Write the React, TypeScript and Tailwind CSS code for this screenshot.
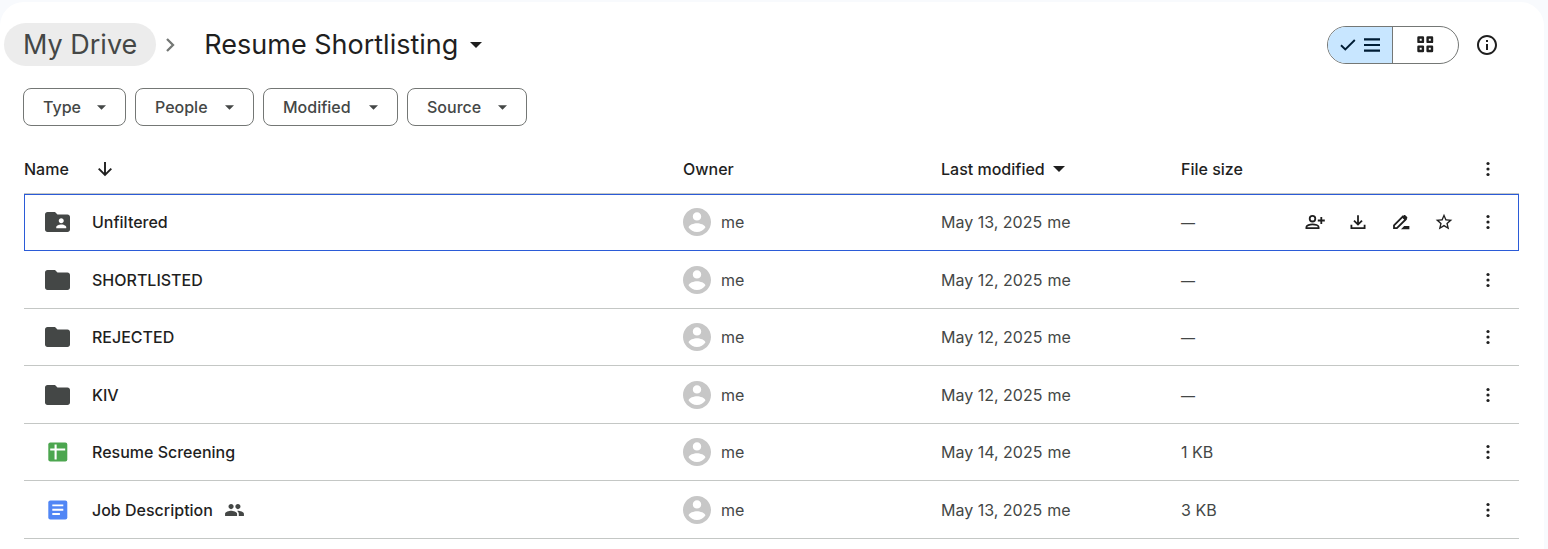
import type { ReactNode } from "react";

type FileKind = "shared-folder" | "folder" | "sheet" | "doc";

type FileRow = {
  name: string;
  kind: FileKind;
  modified: string;
  size?: string;
  selected?: boolean;
  shared?: boolean;
};

const files: FileRow[] = [
  { name: "Unfiltered", kind: "shared-folder", modified: "May 13, 2025", selected: true },
  { name: "SHORTLISTED", kind: "folder", modified: "May 12, 2025" },
  { name: "REJECTED", kind: "folder", modified: "May 12, 2025" },
  { name: "KIV", kind: "folder", modified: "May 12, 2025" },
  { name: "Resume Screening", kind: "sheet", modified: "May 14, 2025", size: "1 KB" },
  { name: "Job Description", kind: "doc", modified: "May 13, 2025", size: "3 KB", shared: true },
];

const filters = [
  { label: "Type", width: "min-w-[103px]" },
  { label: "People", width: "min-w-[119px]" },
  { label: "Modified", width: "min-w-[135px]" },
  { label: "Source", width: "min-w-[120px]" },
];

function Caret({ className }: { className: string }) {
  return (
    <svg viewBox="0 0 10 5" className={className} fill="currentColor" aria-hidden="true">
      <path d="M0 0h10L5 5z" />
    </svg>
  );
}

function KindIcon({ kind }: { kind: FileKind }) {
  if (kind === "sheet") {
    return (
      <svg viewBox="0 0 20 20" className="mx-[3px] size-5" aria-hidden="true">
        <rect x="0.3" y="0.5" width="19" height="19" rx="2" fill="#4ca64f" />
        <path d="M2.2 7.500h15M7.600 2.500v15" stroke="#fff" strokeWidth="2.1" fill="none" />
      </svg>
    );
  }
  if (kind === "doc") {
    return (
      <svg viewBox="0 0 20 20" className="mx-[3px] size-5" aria-hidden="true">
        <rect x="0.3" y="0.5" width="19" height="19" rx="2" fill="#5186f5" />
        <path d="M4.300 5.400h11M4.300 9.700h11M4.300 14h7.600" stroke="#fff" strokeWidth="1.9" fill="none" />
      </svg>
    );
  }
  return (
    <svg viewBox="2 4 20.800 16" className="h-5 w-[26px] text-[#444746]" fill="currentColor" aria-hidden="true">
      {kind === "folder" ? (
        <path d="M10 4H4c-1.1 0-1.99.9-1.99 2L2 18c0 1.1.9 2 2 2h16c1.1 0 2-.9 2-2V8c0-1.1-.9-2-2-2h-8l-2-2z" />
      ) : (
        <path d="M20 6h-8l-2-2H4c-1.1 0-1.99.9-1.99 2L2 18c0 1.1.9 2 2 2h16c1.1 0 2-.9 2-2V8c0-1.1-.9-2-2-2zm-5 3c1.1 0 2 .9 2 2s-.9 2-2 2-2-.9-2-2 .9-2 2-2zm4 8h-8v-1c0-1.33 2.67-2 4-2s4 .67 4 2v1z" />
      )}
    </svg>
  );
}

function IconButton({ label, children }: { label: string; children: ReactNode }) {
  return (
    <button type="button" aria-label={label} className="flex h-10 w-[43px] items-center justify-center rounded-full">
      {children}
    </button>
  );
}

function MoreIcon() {
  return (
    <svg viewBox="0 0 24 24" className="size-6" fill="currentColor" aria-hidden="true">
      <circle cx="13" cy="6.500" r="1.6" />
      <circle cx="13" cy="12" r="1.6" />
      <circle cx="13" cy="17.500" r="1.6" />
    </svg>
  );
}

function RowActions() {
  return (
    <>
      <IconButton label="Share">
        <svg viewBox="0 0 22 22" className="size-[22px]" fill="none" stroke="currentColor" strokeWidth="1.8" aria-hidden="true">
          <circle cx="8.5" cy="7.7" r="2.8" />
          <path d="M2.4 17.2v-1.1c0-1.7 3.3-2.7 6.1-2.7s6.1 1 6.1 2.7v1.1z" />
          <path d="M17.3 6v7M13.8 9.5h7" />
        </svg>
      </IconButton>
      <IconButton label="Download">
        <svg viewBox="0 0 22 22" className="size-[22px]" fill="none" stroke="currentColor" strokeWidth="1.8" aria-hidden="true">
          <path d="M11 4.200v9M7 9.600l4 4 4-4M4.400 13.800v3.400h13.200v-3.400" />
        </svg>
      </IconButton>
      <IconButton label="Rename">
        <svg viewBox="0 0 22 22" className="size-[22px]" aria-hidden="true">
          <path d="M4 17.200v-2.900l8.800-8.800 2.900 2.900-8.800 8.800z" fill="none" stroke="currentColor" strokeWidth="1.8" />
          <path d="m11.800 6.200 1.800-1.800c.6-.6 1.300-.6 1.900 0l1.400 1.400c.6.6.6 1.300 0 1.900l-1.800 1.800z" fill="currentColor" />
          <path d="M11 18.200 14.200 15H19.400v3.200z" fill="currentColor" />
        </svg>
      </IconButton>
      <IconButton label="Add to starred">
        <svg viewBox="0 0 24 24" className="size-5" fill="currentColor" aria-hidden="true">
          <path d="M22 9.24l-7.19-.62L12 2 9.19 8.63 2 9.24l5.46 4.73L5.82 21 12 17.27 18.18 21l-1.63-7.03L22 9.24zM12 15.4l-3.76 2.27 1-4.28-3.32-2.88 4.38-.38L12 6.1l1.71 4.04 4.38.38-3.32 2.88 1 4.28L12 15.4z" />
        </svg>
      </IconButton>
    </>
  );
}

export default function App() {
  return (
    <div className="min-h-screen bg-[#f8fafd] pt-0.5 pr-1 font-['Inter',sans-serif] text-base text-[#1f1f1f]">
      <main className="min-h-[547px] rounded-t-3xl bg-white">
        <header className="flex items-center justify-between pt-[21px] pr-[33px] pl-1">
          <nav aria-label="Breadcrumb" className="flex items-center text-[27px] leading-[43px]">
            <a href="#my-drive" className="rounded-full bg-[#ececec] px-[19px] text-[#444746]">
              My Drive
            </a>
            <svg viewBox="0 0 10 16" className="mx-[9px] h-4 w-[10px] text-[#747775]" fill="none" stroke="currentColor" strokeWidth="2.3" aria-hidden="true">
              <path d="m2 2 6 6-6 6" />
            </svg>
            <button type="button" className="flex items-center gap-3 pl-5">
              Resume Shortlisting
              <Caret className="h-1.5 w-3" />
            </button>
          </nav>
          <div className="flex items-center gap-1">
            <div role="group" aria-label="Layout" className="flex h-[38px] overflow-hidden rounded-full border border-[#747775]">
              <button type="button" aria-label="List layout" aria-pressed="true" className="flex w-[65px] items-center justify-center gap-2 border-r border-[#747775] bg-[#c8e6ff] text-[#001d35]">
                <svg viewBox="0 0 16 12" className="h-3 w-4" fill="none" stroke="currentColor" strokeWidth="1.9" aria-hidden="true">
                  <path d="m1 6.3 4.3 4.2L14.8 1" />
                </svg>
                <svg viewBox="0 0 16 14" className="h-[14px] w-4" fill="none" stroke="currentColor" strokeWidth="2.2" aria-hidden="true">
                  <path d="M0 1.3h16M0 7h16M0 12.7h16" />
                </svg>
              </button>
              <button type="button" aria-label="Grid layout" aria-pressed="false" className="flex w-[65px] items-center justify-center">
                <svg viewBox="0 0 17 17" className="size-[17px]" fill="none" stroke="currentColor" strokeWidth="2.4" strokeLinejoin="round" aria-hidden="true">
                  <path d="M1.500 1.500h4.400v4.400H1.500zM10.600 1.500H15v4.400h-4.400zM1.500 10.600h4.400V15H1.500zM10.600 10.600H15V15h-4.400z" />
                </svg>
              </button>
            </div>
            <button type="button" aria-label="View details" className="flex h-10 w-12 items-center justify-center rounded-full">
              <svg viewBox="0 0 24 24" className="size-6" fill="currentColor" aria-hidden="true">
                <path d="M11 7h2v2h-2zm0 4h2v6h-2zm1-9C6.48 2 2 6.48 2 12s4.480 10 10 10 10-4.480 10-10S17.520 2 12 2zm0 18c-4.410 0-8-3.590-8-8s3.590-8 8-8 8 3.590 8 8-3.590 8-8 8z" />
              </svg>
            </button>
          </div>
        </header>

        <div className="flex flex-wrap gap-[9px] px-[23px] pt-[22px]">
          {filters.map((f) => (
            <button
              key={f.label}
              type="button"
              className={`flex h-[38px] items-center justify-between rounded-lg border border-[#747775] px-[19px] font-medium text-[#444746] ${f.width}`}
            >
              {f.label}
              <Caret className="h-[5px] w-[9px]" />
            </button>
          ))}
        </div>

        <div className="pr-[25px] pl-6">
          <table className="mt-[19px] w-full table-fixed border-separate border-spacing-0 text-left">
            <colgroup>
              <col />
              <col className="w-[258px]" />
              <col className="w-[240px]" />
              <col className="w-[338px]" />
            </colgroup>
            <thead>
              <tr className="h-[49px] [&>th]:border-b [&>th]:border-[#c4c7c5] [&>th]:p-0 [&>th]:font-medium">
                <th scope="col">
                  <button type="button" className="flex items-center gap-7">
                    Name
                    <svg viewBox="0 0 16 16" className="size-4" fill="none" stroke="currentColor" strokeWidth="1.9" aria-hidden="true">
                      <path d="M8 1v13M1.700 7.700 8 14l6.300-6.300" />
                    </svg>
                  </button>
                </th>
                <th scope="col">Owner</th>
                <th scope="col">
                  <button type="button" className="flex items-center gap-2">
                    Last modified
                    <Caret className="h-1.5 w-3" />
                  </button>
                </th>
                <th scope="col">
                  <div className="flex items-center justify-between pr-[11px]">
                    File size
                    <IconButton label="More options">
                      <MoreIcon />
                    </IconButton>
                  </div>
                </th>
              </tr>
            </thead>
            <tbody>
              {files.map((file) => (
                <tr
                  key={file.name}
                  aria-selected={file.selected}
                  className={
                    file.selected
                      ? "h-[57px] outline outline-1 -outline-offset-1 outline-[#2b5bd7] [&>td]:border-b [&>td]:border-transparent [&>td]:p-0 [&>td]:pb-px"
                      : "odd:h-[57px] even:h-[58px] [&>td]:border-b [&>td]:border-[#c4c7c5] [&>td]:p-0"
                  }
                >
                  <td>
                    <div className="flex items-center pl-[21px] font-medium">
                      <KindIcon kind={file.kind} />
                      <span className="pl-[21px]">{file.name}</span>
                      {file.shared && (
                        <svg viewBox="1 5 22 14" role="img" aria-label="Shared" className="ml-3 h-3 w-[19px] text-[#444746]" fill="currentColor">
                          <path d="M16 11c1.660 0 2.990-1.340 2.990-3S17.660 5 16 5c-1.660 0-3 1.340-3 3s1.340 3 3 3zm-8 0c1.660 0 2.990-1.340 2.990-3S9.660 5 8 5C6.340 5 5 6.340 5 8s1.340 3 3 3zm0 2c-2.330 0-7 1.170-7 3.500V19h14v-2.500c0-2.330-4.670-3.500-7-3.500zm8 0c-.29 0-.62.020-.97.050 1.160.84 1.970 1.970 1.970 3.450V19h6v-2.500c0-2.330-4.670-3.500-7-3.500z" />
                        </svg>
                      )}
                    </div>
                  </td>
                  <td>
                    <div className="flex items-center gap-[10px] text-[#444746]">
                      <svg viewBox="2 2 20 20" className="size-7 text-[#c7c7c7]" fill="currentColor" aria-hidden="true">
                        <path d="M12 2C6.480 2 2 6.480 2 12s4.480 10 10 10 10-4.480 10-10S17.520 2 12 2zm0 3c1.660 0 3 1.340 3 3s-1.340 3-3 3-3-1.340-3-3 1.340-3 3-3zm0 14.200c-2.500 0-4.710-1.280-6-3.220.03-1.990 4-3.080 6-3.080 1.990 0 5.970 1.090 6 3.080-1.290 1.940-3.500 3.220-6 3.220z" />
                      </svg>
                      me
                    </div>
                  </td>
                  <td>
                    <div className="flex gap-[5px] text-[#444746]">
                      <span>{file.modified}</span>
                      <span>me</span>
                    </div>
                  </td>
                  <td>
                    <div className="flex items-center pr-[11px]">
                      <span className="grow text-[#444746]">
                        {file.size ?? <span className="text-sm">—</span>}
                      </span>
                      {file.selected && <RowActions />}
                      <IconButton label={`More actions for ${file.name}`}>
                        <MoreIcon />
                      </IconButton>
                    </div>
                  </td>
                </tr>
              ))}
            </tbody>
          </table>
        </div>
      </main>
    </div>
  );
}
